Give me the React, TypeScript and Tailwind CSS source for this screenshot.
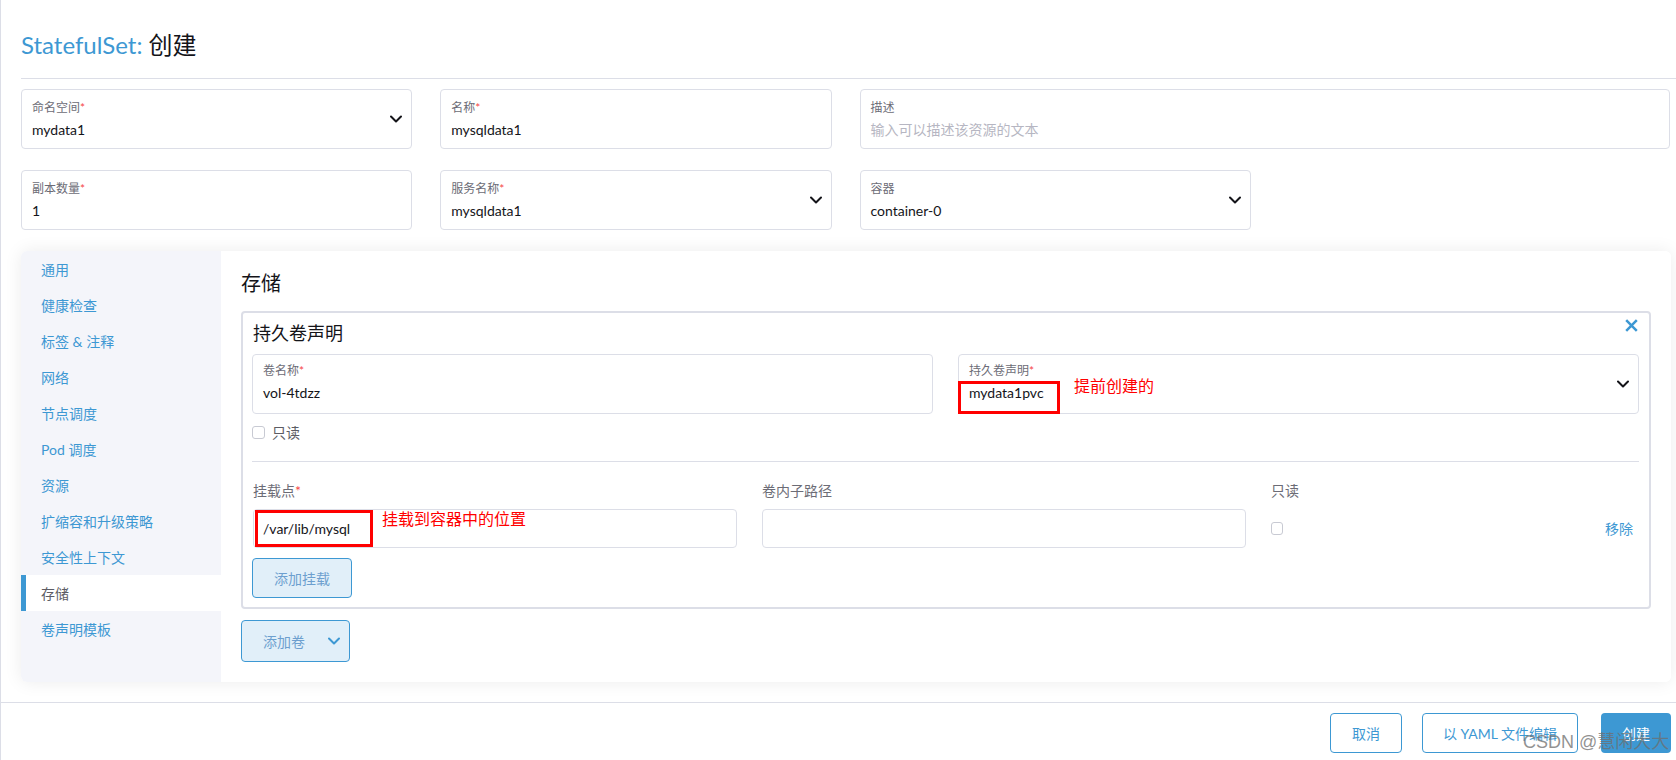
import { ReactNode } from 'react';

const navItems = [
  '通用', '健康检查', '标签 & 注释', '网络', '节点调度', 'Pod 调度', '资源',
  '扩缩容和升级策略', '安全性上下文', '存储', '卷声明模板',
];

function Chevron({ className = 'text-[#141419]' }: { className?: string }) {
  return (
    <svg width="12" height="8" viewBox="0 0 12 8" fill="none" className={className}>
      <path d="M1 1.5L6 6.5L11 1.5" stroke="currentColor" strokeWidth="2" strokeLinecap="round" strokeLinejoin="round" />
    </svg>
  );
}

function Label({ text, required }: { text: string; required?: boolean }) {
  return (
    <div className="text-[12px] leading-[16px] text-[#6c6c76]">
      {text}
      {required && <span className="text-[#f64747]">*</span>}
    </div>
  );
}

function Field({
  label, required, value, placeholder, select, className = '', pt = 'pt-[10px]', children,
}: {
  label: string; required?: boolean; value?: string; placeholder?: string; select?: boolean;
  className?: string; pt?: string; children?: ReactNode;
}) {
  return (
    <div className={`relative h-[60px] flex items-center border border-[#dcdee7] rounded-[4px] pl-[10px] pr-[9px] ${className}`}>
      <div className={`flex-1 self-start ${pt}`}>
        <Label text={label} required={required} />
        {value ? (
          <div className="mt-[4px] text-[14px] leading-[20px] text-[#141419]">{value}</div>
        ) : (
          <div className="mt-[4px] text-[14px] leading-[20px] text-[#b6b6c2]">{placeholder}</div>
        )}
      </div>
      {select && <Chevron />}
      {children}
    </div>
  );
}

export default function App() {
  return (
    <div className="relative w-[1676px] h-[760px] overflow-hidden bg-white border-l border-[#dcdee7] font-['Lato','Noto_Sans_CJK_SC',sans-serif]">
      <div className="pl-5">
        <h1 className="pt-[30px] text-[24px] leading-[30px] font-normal">
          <span className="text-[#3d98d3]">StatefulSet:</span>
          <span className="text-[#141419]"> 创建</span>
        </h1>
        <div className="mt-[18px] h-px bg-[#dcdee7]" />

        {/* top form */}
        <div className="mt-[10px] mr-[6px] grid grid-cols-4 gap-x-[28px] gap-y-[21px]">
          <Field label="命名空间" required value="mydata1" select />
          <Field label="名称" required value="mysqldata1" />
          <Field label="描述" placeholder="输入可以描述该资源的文本" className="col-span-2" />
          <Field label="副本数量" required value="1" />
          <Field label="服务名称" required value="mysqldata1" select />
          <Field label="容器" value="container-0" select />
        </div>

        {/* tabbed panel */}
        <div className="mt-[21px] mr-[5px] flex rounded-[6px] overflow-hidden shadow-[0_0_18px_rgba(0,0,0,0.08)]">
          <div className="w-[200px] bg-[#f4f5fa] shrink-0">
            {navItems.map((item) => (
              <div
                key={item}
                className={
                  item === '存储'
                    ? 'h-[36px] flex items-center pl-[15px] border-l-[5px] border-[#3d98d3] bg-white text-[14px] text-[#5c5c64]'
                    : 'h-[36px] flex items-center pl-5 text-[14px] text-[#3d98d3]'
                }
              >
                {item}
              </div>
            ))}
          </div>

          <div className="flex-1 bg-white px-5 pt-[18px] pb-5">
            <div className="text-[20px] leading-[28px] text-[#141419]">存储</div>

            <div className="relative mt-[14px] border-2 border-[#dcdee7] rounded-[4px] pt-[8px] pl-[9px] pr-[10px] pb-[9px]">
              <div className="text-[18px] leading-[24px] text-[#141419] pl-px">持久卷声明</div>
              <svg width="13" height="13" viewBox="0 0 13 13" className="absolute right-[11px] top-[6px] text-[#3d98d3]">
                <path d="M1.2 1.2L11.8 11.8M11.8 1.2L1.2 11.8" stroke="currentColor" strokeWidth="2.5" />
              </svg>

              <div className="mt-[9px] grid grid-cols-2 gap-x-[25px]">
                <Field label="卷名称" required value="vol-4tdzz" pt="pt-[8px]" />
                <Field label="持久卷声明" required value="mydata1pvc" select pt="pt-[8px]">
                  <div className="absolute left-[-1px] top-[26px] w-[102px] h-[33px] border-[3px] border-[#ff0000]" />
                  <div className="absolute left-[115px] top-[19px] text-[16px] leading-[22px] text-[#ff0000] font-['Noto_Sans_CJK_SC',sans-serif]">
                    提前创建的
                  </div>
                </Field>
              </div>

              <div className="mt-[8px] flex items-center gap-[7px] h-[20px]">
                <div className="w-[13px] h-[13px] rounded-[3px] border border-[#c8cad3]" />
                <span className="text-[14px] text-[#5c5c64]">只读</span>
              </div>

              <div className="mt-[19px] h-px bg-[#dcdee7]" />

              <div className="mt-[19px] grid grid-cols-[484px_484px_1fr] gap-x-[25px] gap-y-[8px] pl-px">
                <div className="text-[14px] leading-[20px] text-[#6c6c76]">
                  挂载点<span className="text-[#f64747]">*</span>
                </div>
                <div className="text-[14px] leading-[20px] text-[#6c6c76]">卷内子路径</div>
                <div className="text-[14px] leading-[20px] text-[#6c6c76]">只读</div>

                <div className="relative h-[39px] border border-[#dcdee7] rounded-[4px] pl-[9px] flex items-center text-[14px] text-[#141419]">
                  /var/lib/mysql
                  <div className="absolute left-[1px] top-0 w-[118px] h-[37px] border-[3px] border-[#ff0000]" />
                  <div className="absolute left-[128px] top-[-3px] text-[16px] leading-[22px] text-[#ff0000] font-['Noto_Sans_CJK_SC',sans-serif]">
                    挂载到容器中的位置
                  </div>
                </div>
                <div className="h-[39px] border border-[#dcdee7] rounded-[4px]" />
                <div className="h-[39px] flex items-center justify-between pr-[6px]">
                  <div className="w-[12px] h-[13px] rounded-[3px] border border-[#c8cad3]" />
                  <span className="text-[14px] text-[#3d98d3]">移除</span>
                </div>
              </div>

              <button className="mt-[10px] w-[100px] h-[40px] rounded-[4px] border border-[#3d98d3] bg-[#e1eff9] text-[14px] text-[#6d9fcf]">
                添加挂载
              </button>
            </div>

            <button className="mt-[11px] w-[109px] h-[42px] rounded-[4px] border border-[#3d98d3] bg-[#e1eff9] flex items-center justify-between pl-[21px] pr-[9px] text-[14px] text-[#6d9fcf]">
              添加卷
              <Chevron className="text-[#3d98d3]" />
            </button>
          </div>
        </div>
      </div>

      {/* footer */}
      <div className="mt-[20px] border-t border-[#dcdee7] pt-[10px] pr-[5px] flex justify-end">
        <button className="w-[72px] h-[40px] rounded-[4px] border border-[#3d98d3] text-[14px] text-[#3d98d3]">取消</button>
        <button className="ml-[20px] w-[156px] h-[40px] rounded-[4px] border border-[#3d98d3] text-[14px] text-[#3d98d3]">以 YAML 文件编辑</button>
        <button className="ml-[23px] w-[70px] h-[40px] rounded-[4px] bg-[#3d98d3] text-[14px] text-white">创建</button>
      </div>

      {/* screenshot watermark */}
      <div className="absolute left-[1522px] top-[729px] text-[18px] leading-[26px] text-[#6e6e6e]/75 font-['Liberation_Sans','Noto_Sans_CJK_SC',sans-serif]">
        CSDN @慧闲大大
      </div>
    </div>
  );
}
